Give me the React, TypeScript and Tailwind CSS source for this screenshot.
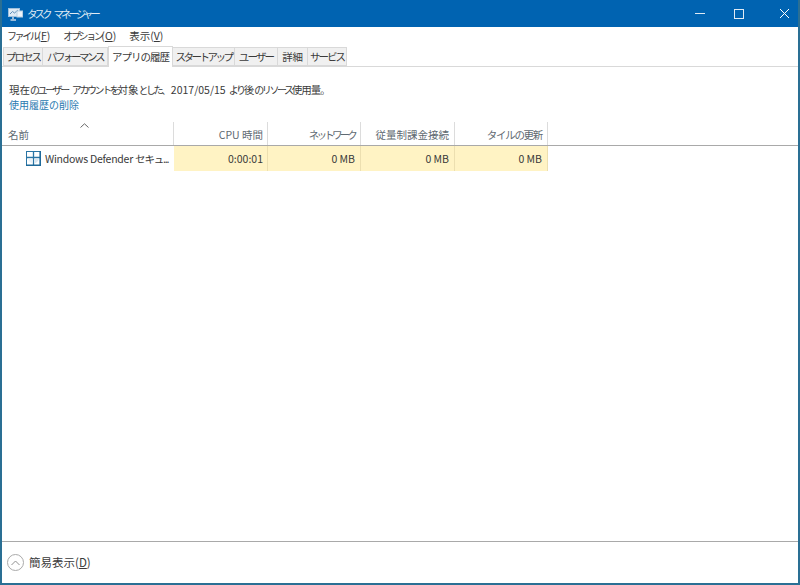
import type { ReactNode } from "react";

const font = "font-['Noto_Sans_CJK_JP','Noto_Sans',sans-serif]";

// kana sit much narrower than kanji in the original UI font
function Kana({ children }: { children: ReactNode }) {
  return <span className="text-[10px] tracking-[-2.4px]">{children}</span>;
}

function Key({ children }: { children: ReactNode }) {
  return (
    <span>
      (<span className="underline">{children}</span>)
    </span>
  );
}

const tabs = [
  { label: "プロセス", w: "w-[40px] border-l", track: "tracking-[-1.9px]" },
  { label: "パフォーマンス", w: "w-[65px]", track: "tracking-[-2.5px]" },
  { label: "アプリの履歴", w: "w-[65px]", track: "tracking-[-1px]", active: true },
  { label: "スタートアップ", w: "w-[62px]", track: "tracking-[-2.5px]" },
  { label: "ユーザー", w: "w-[43px]", track: "tracking-[-1.8px]" },
  { label: "詳細", w: "w-[30px]", track: "tracking-[-0.3px]" },
  { label: "サービス", w: "w-[39px]", track: "tracking-[-2px]" },
];

const columns = [
  { label: "CPU 時間", value: "0:00:01", w: "w-[94px]", pad: "pr-[4px]", track: "" },
  { label: "ネットワーク", value: "0 MB", w: "w-[93px]", pad: "pr-[5px]", track: "tracking-[-2.8px]" },
  { label: "従量制課金接続", value: "0 MB", w: "w-[94px]", pad: "pr-[5px]", track: "" },
  { label: "タイルの更新", value: "0 MB", w: "w-[93px]", pad: "pr-[5px]", track: "tracking-[-1.3px]" },
];

function AppIcon() {
  return (
    <svg width="15" height="14" viewBox="0 0 15 14" className="shrink-0">
      <rect x="0.5" y="1.5" width="11" height="8" fill="#dfeaf4" stroke="#9fc0dc" />
      <path d="M2 7 L4.5 4.5 L6.5 6 L10 3" fill="none" stroke="#5f8fb8" strokeWidth="1" />
      <rect x="9" y="4" width="5.5" height="6" fill="#eef4fa" stroke="#b8cfe2" />
      <path d="M5 10 L5 12 M2.5 13 L8 13" stroke="#c7d8e8" strokeWidth="1.5" />
    </svg>
  );
}

function DefenderIcon() {
  return (
    <svg width="15" height="15" viewBox="0 0 15 15" className="shrink-0">
      <rect x="0.5" y="0.5" width="14" height="14" fill="#ffffff" stroke="#2a75a5" />
      <path d="M7.5 1 V14 M1 6.5 H14" stroke="#2a75a5" strokeWidth="1.3" />
      <path d="M2 7.5 H6.5 V12.5 C4.5 12 2.5 10 2 7.5 Z" fill="#eaf2f8" />
      <path d="M8.5 7.5 H13 C12.5 10 10.5 12 8.5 12.5 Z" fill="#d8e6f1" />
      <path d="M0 14.2 H15 M14.2 0 V15" stroke="#1f6a9a" strokeWidth="1.6" />
    </svg>
  );
}

export default function App() {
  return (
    <div className={`${font} flex h-[585px] w-[800px] flex-col overflow-hidden border-x-2 border-b-2 border-[#2a6f94] bg-white text-[10.5px] text-[#3a3a3a]`}>
      {/* Title bar */}
      <div className="-mx-[2px] flex h-[27px] shrink-0 items-center bg-[#0063b1] pl-[8px] pr-[10px]">
        <AppIcon />
        <span className="ml-[4px] flex gap-[4px] text-[10.5px] tracking-[-3px] text-[#dfeaf4] whitespace-nowrap">
          <span>タスク</span>
          <span>マネージャー</span>
        </span>
        <div className="ml-auto flex items-center">
          <div className="h-px w-[10px] bg-[#dfeaf4]" />
          <div className="ml-[29px] h-[10px] w-[10px] border border-[#dfeaf4]" />
          <svg width="11" height="11" viewBox="0 0 11 11" className="ml-[35px]">
            <path d="M1 1 L10 10 M10 1 L1 10" stroke="#ffffff" strokeWidth="1" />
          </svg>
        </div>
      </div>

      {/* Menu */}
      <div className="flex h-[17px] shrink-0 items-center gap-[13px] pl-[5px] whitespace-nowrap">
        <span><Kana>ファイル</Kana><Key>F</Key></span>
        <span><Kana>オプション</Kana><Key>O</Key></span>
        <span>表示<Key>V</Key></span>
      </div>

      {/* Tabs */}
      <div className="mt-[2px] flex h-[21px] shrink-0 items-end border-b border-[#d9d9d9] pl-px">
        {tabs.map((t) => (
          <div
            key={t.label}
            className={
              t.active
                ? `${t.w} ${t.track} relative -mb-px flex h-[21px] shrink-0 items-center justify-center border border-b-0 border-[#d9d9d9] bg-white whitespace-nowrap`
                : `${t.w} ${t.track} flex h-[19px] shrink-0 items-center justify-center border-y border-r border-[#d9d9d9] bg-[#f0f0f0] whitespace-nowrap`
            }
          >
            {t.label}
          </div>
        ))}
      </div>

      {/* Description */}
      <div className="mt-[16px] flex h-[14px] shrink-0 items-center pl-[7px] whitespace-nowrap">
        <span>
          現在<Kana>のユーザー</Kana>
          <span className="ml-[4px]"><Kana>アカウントを</Kana></span>
          対象<Kana>とした、</Kana>
        </span>
        <span className="ml-[2px]">2017/05/15</span>
        <span className="ml-[3px]">
          <Kana>より</Kana>後<Kana>のリソース</Kana>
          <span className="tracking-[-1px]">使用量</span>
          <Kana>。</Kana>
        </span>
      </div>
      <div className="flex h-[15px] shrink-0 items-center pl-[7px] text-[10px] text-[#2a7ab0]">
        使用履歴の削除
      </div>

      {/* Table header */}
      <div className="mt-[10px] flex h-[24px] shrink-0 border-b border-[#a9a9a9] text-[#5f6a72]">
        <div className="relative flex w-[172px] shrink-0 items-end border-r border-[#dcdcdc] pb-[2px] pl-[6px]">
          <svg width="9" height="5" viewBox="0 0 9 5" className="absolute left-[78px] top-[1px]">
            <path d="M0.5 4.5 L4.5 0.8 L8.5 4.5" fill="none" stroke="#666666" strokeWidth="1" />
          </svg>
          名前
        </div>
        {columns.map((c) => (
          <div
            key={c.label}
            className={`${c.w} ${c.pad} ${c.track} flex shrink-0 items-end justify-end border-r border-[#dcdcdc] pb-[2px] whitespace-nowrap`}
          >
            {c.label}
          </div>
        ))}
      </div>

      {/* Row */}
      <div className="flex h-[25px] shrink-0">
        <div className="flex w-[172px] shrink-0 items-center gap-[4px] pl-[24px] whitespace-nowrap">
          <DefenderIcon />
          <span className="tracking-[-0.25px]">
            Windows Defender <span className="tracking-[-1.2px]">セキュ...</span>
          </span>
        </div>
        {columns.map((c) => (
          <div
            key={c.label}
            className={`${c.w} ${c.pad} flex shrink-0 items-center justify-end border-r border-[#ecdfb0] bg-[#fff3c4]`}
          >
            {c.value}
          </div>
        ))}
      </div>

      {/* Footer */}
      <div className="mt-auto flex h-[42px] shrink-0 items-center gap-[5px] border-t border-[#a9a9a9] pl-[5px] text-[11.5px]">
        <div className="flex h-[17px] w-[17px] items-center justify-center rounded-full border border-[#aaaaaa]">
          <svg width="9" height="6" viewBox="0 0 9 6">
            <path d="M0.5 5 L4.5 1 L8.5 5" fill="none" stroke="#909090" strokeWidth="1" />
          </svg>
        </div>
        <span>簡易表示(<span className="underline">D</span>)</span>
      </div>
    </div>
  );
}
